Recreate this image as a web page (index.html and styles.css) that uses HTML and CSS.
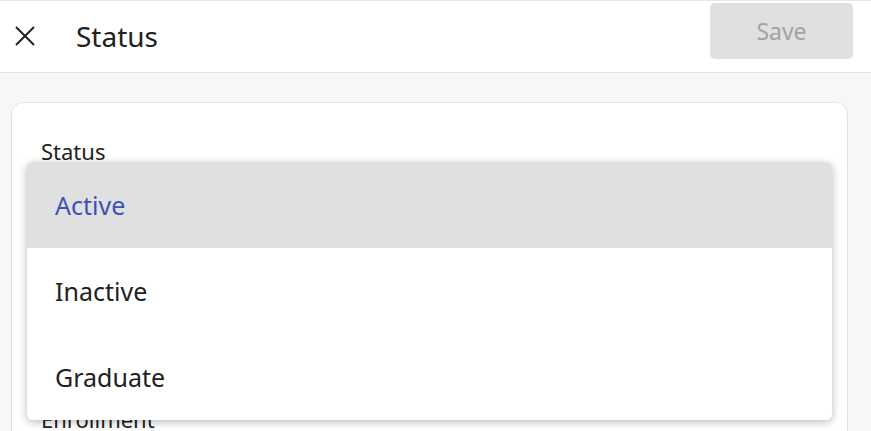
FILE: index.html
```html
<!DOCTYPE html>
<html lang="en">
<head>
  <meta charset="UTF-8" />
  <meta name="viewport" content="width=device-width, initial-scale=1.0" />
  <title>Status</title>
  <link rel="stylesheet" href="styles.css">
</head>
<body>
  <header class="topbar">
    <button class="icon-btn" aria-label="Close">
      <svg width="24" height="24" viewBox="0 0 24 24">
        <path d="M3 3 L21 21 M21 3 L3 21" stroke="#212121" stroke-width="2" fill="none" />
      </svg>
    </button>
    <h1 class="title">Status</h1>
    <button class="save-btn" disabled>Save</button>
  </header>

  <main class="content">
    <section class="card">
      <!-- Status field with open menu -->
      <div class="field">
        <label class="field-label">Status</label>
        <div class="field-input">Active</div>
        <ul class="menu">
          <li class="menu-item selected">Active</li>
          <li class="menu-item">Inactive</li>
          <li class="menu-item">Graduate</li>
        </ul>
      </div>

      <div class="field">
        <label class="field-label">Enrollment</label>
        <div class="field-input"></div>
      </div>
    </section>
  </main>
</body>
</html>
```

FILE: styles.css
```css
:root {
  --texto: #212121;
  --borda: #e3e3e3;
  --fundo: #f7f7f7;
  --primaria: #3f51b5;
}

* {
  box-sizing: border-box;
  margin: 0;
  padding: 0;
}

body {
  font-family: 'Noto Sans', 'Open Sans', sans-serif;
  color: var(--texto);
  background: var(--fundo);
  height: 431px;
  overflow: hidden;
}

.topbar {
  display: flex;
  align-items: center;
  height: 73px;
  background: #fff;
  border-top: 1px solid #e6e6e6;
  border-bottom: 1px solid var(--borda);
  padding: 0 18px 12px 13px;
}

.icon-btn {
  border: none;
  background: none;
  width: 24px;
  height: 24px;
  display: flex;
  margin-top: 10px;
}

.title {
  font-size: 28px;
  font-weight: 400;
  margin-left: 39px;
  margin-top: 10px;
  flex: 1;
}

.save-btn {
  width: 143px;
  height: 56px;
  border: none;
  border-radius: 5px;
  background: #e0e0e0;
  color: #a3a3a3;
  font-family: inherit;
  font-size: 23px;
}

.content {
  padding: 29px 23px 0 11px;
}

.card {
  background: #fff;
  border: 1px solid var(--borda);
  border-radius: 12px;
  padding: 33px 29px 0;
  height: 380px;
}

.field {
  position: relative;
  margin-bottom: 182px;
}

.field-label {
  display: block;
  font-size: 22px;
  line-height: 30px;
}

.field-input {
  height: 56px;
  visibility: hidden;
}

.menu {
  position: absolute;
  top: 26px;
  left: -14px;
  right: -14px;
  list-style: none;
  background: #fff;
  border-radius: 6px;
  box-shadow: 0 2px 8px rgba(0, 0, 0, 0.28);
  overflow: hidden;
  z-index: 2;
}

.menu-item {
  height: 86px;
  display: flex;
  align-items: center;
  padding-left: 28px;
  font-size: 25px;
}

.menu-item.selected {
  background: #e0e0e0;
  color: var(--primaria);
}
```
